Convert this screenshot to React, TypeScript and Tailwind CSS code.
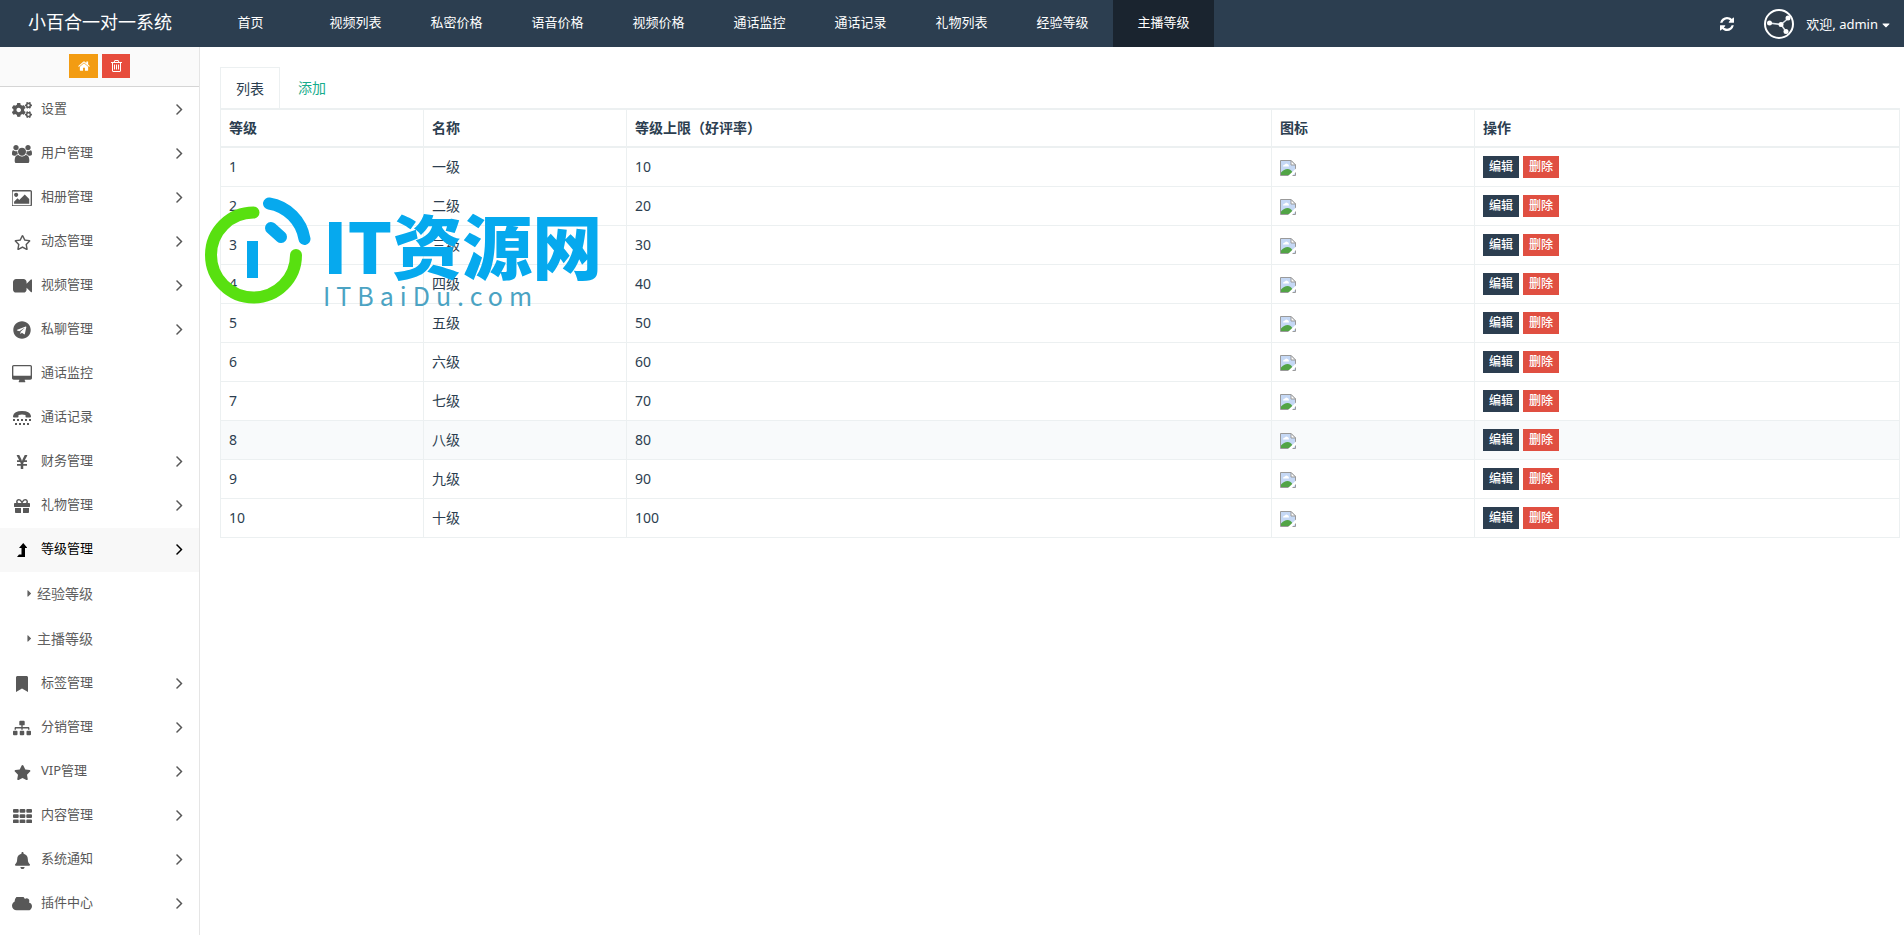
import React from "react";
import {
    FaBell,
    FaBookmark,
    FaCaretDown,
    FaCaretRight,
    FaCogs,
    FaGift,
    FaRegStar,
    FaSitemap,
    FaStar,
    FaTelegram,
    FaYenSign,
} from "react-icons/fa";

type GlyphProps = { viewBox: string; d: string; className?: string };

const Glyph = ({ viewBox, d, className }: GlyphProps) => (
    <svg viewBox={viewBox} fill="currentColor" className={className} aria-hidden="true">
        <path d={d} />
    </svg>
);

const REFRESH =
    "M1511 928q0 5-1 7-64 268-268 434.5t-478 166.5q-146 0-282.5-55t-243.5-157l-129 129q-19 19-45 19t-45-19-19-45v-448q0-26 19-45t45-19h448q26 0 45 19t19 45-19 45l-137 137q71 66 161 102t187 36q134 0 250-65t186-179q11-17 53-117 8-23 30-23h192q13 0 22.5 9.5t9.5 22.5zm25-800v448q0 26-19 45t-45 19h-448q-26 0-45-19t-19-45 19-45l138-138q-148-137-349-137-134 0-250 65t-186 179q-11 17-53 117-8 23-30 23h-199q-13 0-22.5-9.5t-9.5-22.5v-7q65-268 270-434.5t480-166.5q146 0 284 55.5t245 156.5l130-129q19-19 45-19t45 19 19 45z";
const HOME =
    "M1408 992v480q0 26-19 45t-45 19h-384v-384h-256v384h-384q-26 0-45-19t-19-45v-480q0-1 .5-3t.5-3l575-474 575 474q1 2 1 6zm223-69l-62 74q-8 9-21 11h-3q-13 0-21-7l-692-577-692 577q-12 8-24 7-13-2-21-11l-62-74q-8-10-7-23.5t11-21.5l719-599q32-26 76-26t76 26l244 204v-195q0-14 9-23t23-9h192q14 0 23 9t9 23v408l219 182q10 8 11 21.5t-7 23.5z";
const TRASH =
    "M512 736v576q0 14-9 23t-23 9h-64q-14 0-23-9t-9-23v-576q0-14 9-23t23-9h64q14 0 23 9t9 23zm256 0v576q0 14-9 23t-23 9h-64q-14 0-23-9t-9-23v-576q0-14 9-23t23-9h64q14 0 23 9t9 23zm256 0v576q0 14-9 23t-23 9h-64q-14 0-23-9t-9-23v-576q0-14 9-23t23-9h64q14 0 23 9t9 23zm128 724v-948h-896v948q0 22 7 40.5t14.5 27 10.5 8.5h832q3 0 10.5-8.5t14.5-27 7-40.5zm-672-1076h448l-48-117q-7-9-17-11h-317q-10 2-17 11zm928 32v64q0 14-9 23t-23 9h-96v948q0 83-47 143.5t-113 60.5h-832q-66 0-113-58.5t-47-141.5v-952h-96q-14 0-23-9t-9-23v-64q0-14 9-23t23-9h309l70-167q15-37 54-63t79-26h320q40 0 79 26t54 63l70 167h309q14 0 23 9t9 23z";
const USERS =
    "M593 896q-162 5-265 128h-134q-82 0-138-40.5t-56-118.5q0-353 124-353 6 0 43.5 21t97.5 42.5 119 21.5q67 0 133-23-5 37-5 66 0 139 81 256zm1071 637q0 120-73 189.5t-194 69.5h-874q-121 0-194-69.5t-73-189.5q0-53 3.5-103.5t14-109 26.5-108.5 43-97.5 62-81 85.5-53.5 111.5-20q10 0 43 21.5t73 48 107 48 135 21.5 135-21.5 107-48 73-48 43-21.5q61 0 111.5 20t85.5 53.5 62 81 43 97.5 26.5 108.5 14 109 3.5 103.5zm-1024-1277q0 106-75 181t-181 75-181-75-75-181 75-181 181-75 181 75 75 181zm704 384q0 159-112.5 271.5t-271.5 112.5-271.5-112.5-112.5-271.5 112.5-271.5 271.5-112.5 271.5 112.5 112.5 271.5zm576 225q0 78-56 118.5t-138 40.5h-134q-103-123-265-128 81-117 81-256 0-29-5-66 66 23 133 23 59 0 119-21.5t97.5-42.5 43.5-21q124 0 124 353zm-128-609q0 106-75 181t-181 75-181-75-75-181 75-181 181-75 181 75 75 181z";
const PICTURE =
    "M576 576q0 80-56 136t-136 56-136-56-56-136 56-136 136-56 136 56 56 136zm1024 384v448h-1408v-192l320-320 160 160 512-512zm96-704h-1600q-13 0-22.5 9.5t-9.5 22.5v1216q0 13 9.5 22.5t22.5 9.5h1600q13 0 22.5-9.5t9.5-22.5v-1216q0-13-9.5-22.5t-22.5-9.5zm160 32v1216q0 66-47 113t-113 47h-1600q-66 0-113-47t-47-113v-1216q0-66 47-113t113-47h1600q66 0 113 47t47 113z";
const VIDEO =
    "M1792 352v1088q0 42-39 59-13 5-25 5-27 0-45-19l-403-403v166q0 119-84.5 203.5t-203.5 84.5h-704q-119 0-203.5-84.5t-84.5-203.5v-704q0-119 84.5-203.5t203.5-84.5h704q119 0 203.5 84.5t84.5 203.5v165l403-402q18-19 45-19 12 0 25 5 39 17 39 59z";
const DESKTOP =
    "M1792 992v-832q0-13-9.5-22.5t-22.5-9.5h-1600q-13 0-22.5 9.5t-9.5 22.5v832q0 13 9.5 22.5t22.5 9.5h1600q13 0 22.5-9.5t9.5-22.5zm128-832v1088q0 66-47 113t-113 47h-544q0 37 16 77.5t32 71 16 43.5q0 26-19 45t-45 19h-512q-26 0-45-19t-19-45q0-14 16-44t32-70 16-78h-544q-66 0-113-47t-47-113v-1088q0-66 47-113t113-47h1600q66 0 113 47t47 113z";
const CLOUD =
    "M1920 1152q0 159-112.5 271.5t-271.5 112.5h-1088q-185 0-316.5-131.5t-131.5-316.5q0-132 71-241.5t187-163.5q-2-28-2-43 0-212 150-362t362-150q158 0 286.5 88t187.5 230q70-62 166-62 106 0 181 75t75 181q0 75-41 138 129 30 213 134.5t84 239.5z";
const ANGLE =
    "M595 960q0 13-10 23l-466 466q-10 10-23 10t-23-10l-50-50q-10-10-10-23t10-23l393-393-393-393q-10-10-10-23t10-23l50-50q10-10 23-10t23 10l466 466q10 10 10 23z";
const LEVEL_UP = "M0 14h8V5h2.500L6.250 0 2 5h2.500v6.500H2z";
const PHONE =
    "M0 5Q1 0 9 0t9 5v.5q0 1-1 1h-3.500q-1 0-1-1V4Q9 3 5.500 4v1.500q0 1-1 1H1q-1 0-1-1zM0 8h2v2H0zM4 8h2v2H4zM8 8h2v2H8zM12 8h2v2h-2zM16 8h2v2h-2zM2 12h2v2H2zM6 12h2v2H6zM10 12h2v2h-2zM14 12h2v2h-2z";
const GRID =
    "M1 0h4q1 0 1 1v2q0 1-1 1h-4q-1 0-1-1v-2q0-1 1-1zm7 0h4q1 0 1 1v2q0 1-1 1h-4q-1 0-1-1v-2q0-1 1-1zm7 0h4q1 0 1 1v2q0 1-1 1h-4q-1 0-1-1v-2q0-1 1-1zM1 5.500h4q1 0 1 1v2q0 1-1 1h-4q-1 0-1-1v-2q0-1 1-1zm7 0h4q1 0 1 1v2q0 1-1 1h-4q-1 0-1-1v-2q0-1 1-1zm7 0h4q1 0 1 1v2q0 1-1 1h-4q-1 0-1-1v-2q0-1 1-1zM1 11h4q1 0 1 1v2q0 1-1 1h-4q-1 0-1-1v-2q0-1 1-1zm7 0h4q1 0 1 1v2q0 1-1 1h-4q-1 0-1-1v-2q0-1 1-1zm7 0h4q1 0 1 1v2q0 1-1 1h-4q-1 0-1-1v-2q0-1 1-1z";

const navItems = [
    "视频列表",
    "私密价格",
    "语音价格",
    "视频价格",
    "通话监控",
    "通话记录",
    "礼物列表",
    "经验等级",
    "主播等级",
];

type MenuItem = {
    label: string;
    icon: React.ReactNode;
    leaf?: boolean;
    active?: boolean;
    children?: string[];
};

const menu: MenuItem[] = [
    { label: "设置", icon: <FaCogs className="size-5" /> },
    { label: "用户管理", icon: <Glyph viewBox="0 0 1920 1792" d={USERS} className="w-5" /> },
    { label: "相册管理", icon: <Glyph viewBox="0 128 1856 1536" d={PICTURE} className="w-5" /> },
    { label: "动态管理", icon: <FaRegStar className="size-[17px]" /> },
    { label: "视频管理", icon: <Glyph viewBox="0 256 1792 1280" d={VIDEO} className="w-[19px]" /> },
    { label: "私聊管理", icon: <FaTelegram className="size-[18px]" /> },
    { label: "通话监控", icon: <Glyph viewBox="0 0 1920 1664" d={DESKTOP} className="w-5" />, leaf: true },
    { label: "通话记录", icon: <Glyph viewBox="0 0 18 14" d={PHONE} className="w-[18px]" />, leaf: true },
    { label: "财务管理", icon: <FaYenSign className="size-4" /> },
    { label: "礼物管理", icon: <FaGift className="size-4" /> },
    {
        label: "等级管理",
        icon: <Glyph viewBox="0 0 10.500 14" d={LEVEL_UP} className="h-[14px]" />,
        active: true,
        children: ["经验等级", "主播等级"],
    },
    { label: "标签管理", icon: <FaBookmark className="size-4" /> },
    { label: "分销管理", icon: <FaSitemap className="size-[18px]" /> },
    { label: "VIP管理", icon: <FaStar className="size-[17px]" /> },
    { label: "内容管理", icon: <Glyph viewBox="0 0 20 15" d={GRID} className="w-[19px]" /> },
    { label: "系统通知", icon: <FaBell className="size-[17px]" /> },
    { label: "插件中心", icon: <Glyph viewBox="0 256 1920 1280" d={CLOUD} className="w-5" /> },
];

const levels = ["一级", "二级", "三级", "四级", "五级", "六级", "七级", "八级", "九级", "十级"];

const BrokenImage = () => (
    <svg viewBox="0 0 16 16" className="mt-[3px] size-4" role="img" aria-label="图标">
        <path d="M.5.5h10.500l4.500 4.500v10.500H.5z" fill="#c5d8f5" stroke="#9a9a9a" />
        <path d="M3 6.500q0-2 2-2 1-1.500 2.500-.5 1.500 0 1.500 2.500z" fill="#fff" />
        <path d="M1 15v-2.500Q4 9 7.500 9q3.500 0 5 3.500V15z" fill="#52a446" />
        <path d="M11 .5v4.500h4.500z" fill="#fff" stroke="#9a9a9a" />
        <path d="M8 16l8-7.500v3.500L12 16z" fill="#fff" />
    </svg>
);

const Avatar = () => (
    <svg viewBox="0 0 30 30" className="size-[30px]" aria-hidden="true">
        <circle cx="15" cy="15" r="14" fill="#2f3c49" stroke="#fff" strokeWidth="2" />
        <path d="M5 14l12 1.500 7-6M17 15.500l5 7" fill="none" stroke="#dfe5ea" strokeWidth="1.500" />
        <g fill="#fff">
            <circle cx="5.500" cy="14" r="2.500" />
            <circle cx="17" cy="15.500" r="2.500" />
            <circle cx="24" cy="9" r="2.500" />
            <circle cx="22" cy="22.500" r="2.500" />
        </g>
    </svg>
);

const Watermark = () => (
    <div className="pointer-events-none absolute top-[197px] left-[205px] flex">
        <svg viewBox="0 0 106 108" className="h-[108px] w-[106px]" fill="none" aria-hidden="true">
            <path d="M48.500 15.500A42.500 42.500 0 1 0 91 58" stroke="#58e010" strokeWidth="12" strokeLinecap="round" />
            <path d="M64 6.500A43 43 0 0 1 99.500 42" stroke="#06a9ee" strokeWidth="12" strokeLinecap="round" />
            <path d="M66 31l10 9" stroke="#06a9ee" strokeWidth="12" strokeLinecap="round" />
            <path d="M47.500 44v37" stroke="#06a9ee" strokeWidth="11" />
        </svg>
        <div className="pt-3 pl-3 font-['Noto_Sans_CJK_SC',sans-serif] text-[#06a9ee]">
            <div className="text-[70px] leading-[70px] font-black whitespace-nowrap">IT资源网</div>
            <div className="text-[25px] leading-8 tracking-[6px] text-[#4ba3c3]">ITBaiDu.com</div>
        </div>
    </div>
);

const Header = () => (
    <header className="flex h-[47px] bg-[#2c3e50] text-white">
        <a href="#" className="flex w-[200px] shrink-0 items-center justify-center pb-0.5 text-[18px]">
            小百合一对一系统
        </a>
        <nav className="flex text-[13px]">
            <a href="#" className="flex w-[105px] items-center justify-center pr-1 pb-0.5">
                首页
            </a>
            {navItems.map((item) => (
                <a
                    key={item}
                    href="#"
                    className={`flex w-[101px] items-center justify-center pb-0.5 ${item === "主播等级" ? "bg-[#1a242f]" : ""}`}
                >
                    {item}
                </a>
            ))}
        </nav>
        <div className="ml-auto flex items-center pr-3">
            <button aria-label="刷新" className="mr-[30px]">
                <Glyph viewBox="0 0 1536 1536" d={REFRESH} className="size-[14px]" />
            </button>
            <button className="flex items-center text-[13px]">
                <Avatar />
                <span className="ml-3 pt-0.5">欢迎, admin</span>
                <FaCaretDown className="mt-0.5 ml-0.5 size-3" />
            </button>
        </div>
    </header>
);

const Sidebar = () => (
    <aside className="w-[200px] shrink-0 border-r border-[#e5e5e5] text-[13px] text-[#585858]">
        <div className="flex h-10 items-start justify-center gap-1 border-b border-[#d5d5d5] bg-[#fafafa] pt-[7px] text-white">
            <button aria-label="首页" className="flex h-6 w-[29px] items-center justify-center bg-[#f39c12]">
                <Glyph viewBox="0 200 1664 1340" d={HOME} className="w-3" />
            </button>
            <button aria-label="清除" className="flex h-6 w-7 items-center justify-center bg-[#e74c3c]">
                <Glyph viewBox="0 128 1408 1536" d={TRASH} className="w-[11px]" />
            </button>
        </div>
        <ul className="pt-px">
            {menu.map((item) => (
                <li key={item.label}>
                    <a
                        href="#"
                        className={`flex h-11 items-center pr-4 pb-0.5 pl-3 ${item.active ? "bg-[#f8f8f8] text-black" : ""}`}
                    >
                        <span className="flex w-5 justify-center pt-0.5">{item.icon}</span>
                        <span className="ml-[9px]">{item.label}</span>
                        {!item.leaf && (
                            <Glyph viewBox="0 448 608 1024" d={ANGLE} className="ml-auto h-[11px]" />
                        )}
                    </a>
                    {item.children?.map((child) => (
                        <a
                            key={child}
                            href="#"
                            className="flex h-[45px] items-center pb-0.5 pl-6 text-[14px] text-[#616161]"
                        >
                            <FaCaretRight className="mr-0.5 size-[11px]" />
                            {child}
                        </a>
                    ))}
                </li>
            ))}
        </ul>
    </aside>
);

const LevelTable = () => (
    <table className="w-full table-fixed border-collapse border border-[#ecf0f1] text-left">
        <colgroup>
            <col className="w-[203px]" />
            <col className="w-[203px]" />
            <col />
            <col className="w-[203px]" />
            <col className="w-[425px]" />
        </colgroup>
        <thead>
            <tr className="h-[38px] border-y-2 border-[#ecf0f1]">
                {["等级", "名称", "等级上限（好评率）", "图标", "操作"].map((title) => (
                    <th key={title} className="border-x border-x-[#ecf0f1] px-2 pb-0.5 font-bold">
                        {title}
                    </th>
                ))}
            </tr>
        </thead>
        <tbody>
            {levels.map((name, i) => (
                <tr key={name} className={`h-[39px] ${i === 7 ? "bg-[#f8fafb]" : ""}`}>
                    <td className="border border-[#ecf0f1] px-2">{i + 1}</td>
                    <td className="border border-[#ecf0f1] px-2">{name}</td>
                    <td className="border border-[#ecf0f1] px-2">{(i + 1) * 10}</td>
                    <td className="border border-[#ecf0f1] px-2">
                        <BrokenImage />
                    </td>
                    <td className="border border-[#ecf0f1] px-2">
                        <div className="flex gap-1 text-[12px] font-medium text-white">
                            <button className="h-[22px] w-9 bg-[#2c3e50]">编辑</button>
                            <button className="h-[22px] w-9 bg-[#e04f41]">删除</button>
                        </div>
                    </td>
                </tr>
            ))}
        </tbody>
    </table>
);

const App = () => {
    return (
        <div className="relative flex min-h-screen flex-col bg-white font-['Noto_Sans','Noto_Sans_CJK_SC',sans-serif]">
            <Header />
            <div className="flex flex-1">
                <Sidebar />
                <main className="flex-1 pt-5 pr-1 pl-5 text-[14px] text-[#2c3e50]">
                    <div className="flex h-[41px]">
                        <button className="w-[60px] border border-b-0 border-[#ecf0f1]">列表</button>
                        <button className="w-16 text-[#18ac8c]">添加</button>
                    </div>
                    <LevelTable />
                </main>
            </div>
            <Watermark />
        </div>
    );
};

export default App;
